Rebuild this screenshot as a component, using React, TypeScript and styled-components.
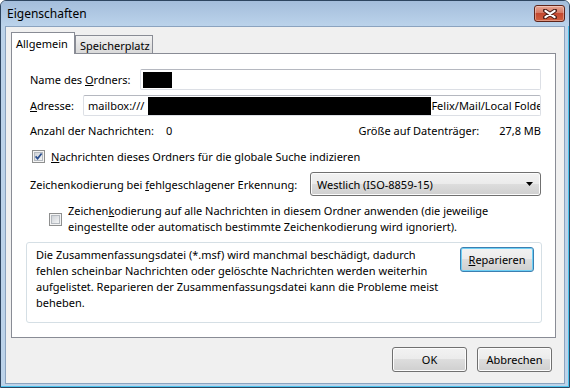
import React from 'react'
import styled, { createGlobalStyle } from 'styled-components'

const GlobalStyle = createGlobalStyle`
  html, body {
    margin: 0;
    padding: 0;
    background: #ffffff;
  }
  body {
    font-family: "Noto Sans", "Open Sans", sans-serif;
    font-size: 11px;
    color: #000;
  }
`

const Window = styled.div`
  width: 570px;
  height: 388px;
  box-sizing: border-box;
  border: 1px solid #2e4560;
  border-radius: 6px 6px 0 0;
  background: #bcd3ea;
  box-shadow: inset -1px -1px 0 #4cc4ee;
  display: flex;
  flex-direction: column;
  overflow: hidden;
`

const TitleBar = styled.div`
  height: 25px;
  flex: none;
  display: flex;
  align-items: center;
  justify-content: space-between;
  padding: 0 4px 0 6px;
  background: linear-gradient(#a4bddb, #bbd3eb);
  font-size: 12px;
`

const CloseButton = styled.div`
  width: 31px;
  height: 17px;
  box-sizing: border-box;
  border: 1px solid #5e241a;
  border-radius: 3px;
  background: linear-gradient(#e7a594, #d67a64 45%, #c4482f 50%, #d0603f);
  box-shadow: inset 0 0 0 1px rgba(255, 255, 255, 0.35);
  display: flex;
  align-items: center;
  justify-content: center;
`

const Client = styled.div`
  flex: 1;
  margin: 0 4px 3px 4px;
  border: 1px solid #8ba3bf;
  background: #f0f0f0;
  padding: 5px 8px 0 5px;
  display: flex;
  flex-direction: column;
`

const TabStrip = styled.div`
  height: 22px;
  display: flex;
  align-items: flex-end;
  flex: none;
`

const Tab = styled.div<{ $active?: boolean; $w: number }>`
  box-sizing: border-box;
  width: ${({ $w }) => $w}px;
  height: ${({ $active }) => ($active ? '22px' : '19px')};
  padding: ${({ $active }) => ($active ? '0 0 0 4px' : '1px 0 0 4px')};
  border: 1px solid #898c95;
  border-bottom: none;
  display: flex;
  align-items: center;
  white-space: nowrap;
  background: ${({ $active }) => ($active ? '#ffffff' : 'linear-gradient(#f2f2f2, #e4e4e4 50%, #d8d8d8)')};
  position: ${({ $active }) => ($active ? 'relative' : 'static')};
  z-index: ${({ $active }) => ($active ? 1 : 'auto')};
`

const Panel = styled.div`
  height: 285px;
  flex: none;
  margin-top: -1px;
  box-sizing: border-box;
  border: 1px solid #898c95;
  background: #ffffff;
  padding: 15px 14px 0 18px;
  display: flex;
  flex-direction: column;
`

const Row = styled.div<{ $mt: number; $h: number }>`
  margin-top: ${({ $mt }) => $mt}px;
  height: ${({ $h }) => $h}px;
  display: flex;
  align-items: center;
  flex: none;
`

const Label = styled.span<{ $gap?: number }>`
  white-space: nowrap;
  margin-right: ${({ $gap }) => $gap ?? 0}px;
`

const TextBox = styled.div<{ $pad: number }>`
  flex: 1;
  min-width: 0;
  height: 100%;
  box-sizing: border-box;
  border: 1px solid #dcdfe5;
  border-top-color: #b5b8c0;
  border-radius: 2px;
  background: #fff;
  padding-left: ${({ $pad }) => $pad}px;
  display: flex;
  align-items: center;
  white-space: nowrap;
  overflow: hidden;
`

const Redacted = styled.span<{ $w: number; $h: number; $ml?: number }>`
  display: inline-block;
  flex: none;
  width: ${({ $w }) => $w}px;
  height: ${({ $h }) => $h}px;
  margin-left: ${({ $ml }) => $ml ?? 0}px;
  background: #000;
`

const Spacer = styled.div`
  flex: 1;
`

const Value = styled.span<{ $ml: number }>`
  margin-left: ${({ $ml }) => $ml}px;
  white-space: nowrap;
`

const CheckBox = styled.span<{ $ml: number }>`
  flex: none;
  width: 13px;
  height: 13px;
  box-sizing: border-box;
  margin-left: ${({ $ml }) => $ml}px;
  margin-right: 6px;
  border: 1px solid #8e8f8f;
  background: #f4f4f4;
  display: flex;
  align-items: center;
  justify-content: center;
`

const CheckInner = styled.span`
  width: 9px;
  height: 9px;
  box-sizing: border-box;
  border: 1px solid #b4b9bf;
  background: linear-gradient(135deg, #cfd3d8, #f3f4f5);
  display: flex;
  align-items: center;
  justify-content: center;
`

const TwoLines = styled.div`
  line-height: 16px;
  white-space: nowrap;
`

const Combo = styled.div`
  width: 231px;
  height: 24px;
  flex: none;
  box-sizing: border-box;
  border: 1px solid #707070;
  border-radius: 3px;
  background: linear-gradient(#f2f2f2, #ebebeb 50%, #dddddd 50%, #cfcfcf);
  box-shadow: inset 0 0 0 1px #fcfcfc;
  display: flex;
  align-items: center;
  justify-content: space-between;
  padding: 0 7px 0 6px;
`

const GroupBox = styled.div`
  margin-top: 7px;
  margin-left: -4px;
  margin-right: -1px;
  height: 81px;
  flex: none;
  box-sizing: border-box;
  border: 1px solid #d5dfe5;
  border-radius: 3px;
  padding: 4px 7px 0 9px;
  display: flex;
  justify-content: space-between;
  align-items: flex-start;
`

const GroupText = styled.div`
  line-height: 16px;
  white-space: nowrap;
`

const PushButton = styled.div<{ $default?: boolean }>`
  width: ${({ $default }) => ($default ? '74px' : '75px')};
  height: 25px;
  flex: none;
  box-sizing: border-box;
  border: 1px solid ${({ $default }) => ($default ? '#3c7fb1' : '#707070')};
  border-radius: 3px;
  background: linear-gradient(#f2f2f2, #ebebeb 50%, #dddddd 50%, #cfcfcf);
  box-shadow: inset 0 0 0 1px ${({ $default }) => ($default ? '#6fd0f5' : '#fcfcfc')};
  display: flex;
  align-items: center;
  justify-content: center;
`

const Footer = styled.div`
  margin-top: 9px;
  display: flex;
  justify-content: flex-end;
  gap: 10px;
  padding-right: 4px;
`

const App = () => {
  return (
    <>
      <GlobalStyle />
      <Window>
        <TitleBar>
          <span>Eigenschaften</span>
          <CloseButton>
            <svg width="14" height="10" viewBox="0 0 14 10">
              <path d="M2 1.5 L12 8.5 M12 1.5 L2 8.5" stroke="#4a1d16" strokeWidth="4" strokeLinecap="round" />
              <path d="M2.4 1.8 L11.6 8.2 M11.6 1.8 L2.4 8.2" stroke="#ffffff" strokeWidth="2.2" strokeLinecap="round" />
            </svg>
          </CloseButton>
        </TitleBar>
        <Client>
          <TabStrip>
            <Tab $active $w={64}>
              Allgemein
            </Tab>
            <Tab $w={78}>Speicherplatz</Tab>
          </TabStrip>
          <Panel>
            <Row $mt={0} $h={21}>
              <Label $gap={10}>
                Name des <u>O</u>rdners:
              </Label>
              <TextBox $pad={2}>
                <Redacted $w={29} $h={16} />
              </TextBox>
            </Row>
            <Row $mt={5} $h={21}>
              <Label $gap={9}>
                <u>A</u>dresse:
              </Label>
              <TextBox $pad={4}>
                mailbox:///
                <Redacted $w={283} $h={18} $ml={4} />
                Felix/Mail/Local Folders
              </TextBox>
            </Row>
            <Row $mt={6} $h={16}>
              <Label>Anzahl der Nachrichten:</Label>
              <Value $ml={12}>0</Value>
              <Spacer />
              <Label>Größe auf Datenträger:</Label>
              <Value $ml={20}>27,8 MB</Value>
            </Row>
            <Row $mt={10} $h={16}>
              <CheckBox $ml={2}>
                <CheckInner>
                  <svg width="9" height="9" viewBox="0 0 9 9" style={{ margin: -1 }}>
                    <path d="M1.6 4.4 L3.6 6.6 L7.6 1.4" fill="none" stroke="#2b4f8f" strokeWidth="1.7" />
                  </svg>
                </CheckInner>
              </CheckBox>
              <Label>
                <u>N</u>achrichten dieses Ordners für die globale Suche indizieren
              </Label>
            </Row>
            <Row $mt={8} $h={24}>
              <Label>
                Zeichenkodierung bei <u>f</u>ehlgeschlagener Erkennung:
              </Label>
              <Spacer />
              <Combo>
                <span>Westlich (ISO-8859-15)</span>
                <svg width="7" height="4" viewBox="0 0 7 4">
                  <path d="M0 0 H7 L3.5 4 Z" fill="#000" />
                </svg>
              </Combo>
            </Row>
            <Row $mt={7} $h={32}>
              <CheckBox $ml={19}>
                <CheckInner />
              </CheckBox>
              <TwoLines>
                Zeichen<u>k</u>odierung auf alle Nachrichten in diesem Ordner anwenden (die jeweilige
                <br />
                eingestellte oder automatisch bestimmte Zeichenkodierung wird ignoriert).
              </TwoLines>
            </Row>
            <GroupBox>
              <GroupText>
                Die Zusammenfassungsdatei (*.msf) wird manchmal beschädigt, dadurch
                <br />
                fehlen scheinbar Nachrichten oder gelöschte Nachrichten werden weiterhin
                <br />
                aufgelistet. Reparieren der Zusammenfassungsdatei kann die Probleme meist
                <br />
                beheben.
              </GroupText>
              <PushButton $default>
                <span>
                  <u>R</u>eparieren
                </span>
              </PushButton>
            </GroupBox>
          </Panel>
          <Footer>
            <PushButton>OK</PushButton>
            <PushButton>Abbrechen</PushButton>
          </Footer>
        </Client>
      </Window>
    </>
  )
}

export default App
